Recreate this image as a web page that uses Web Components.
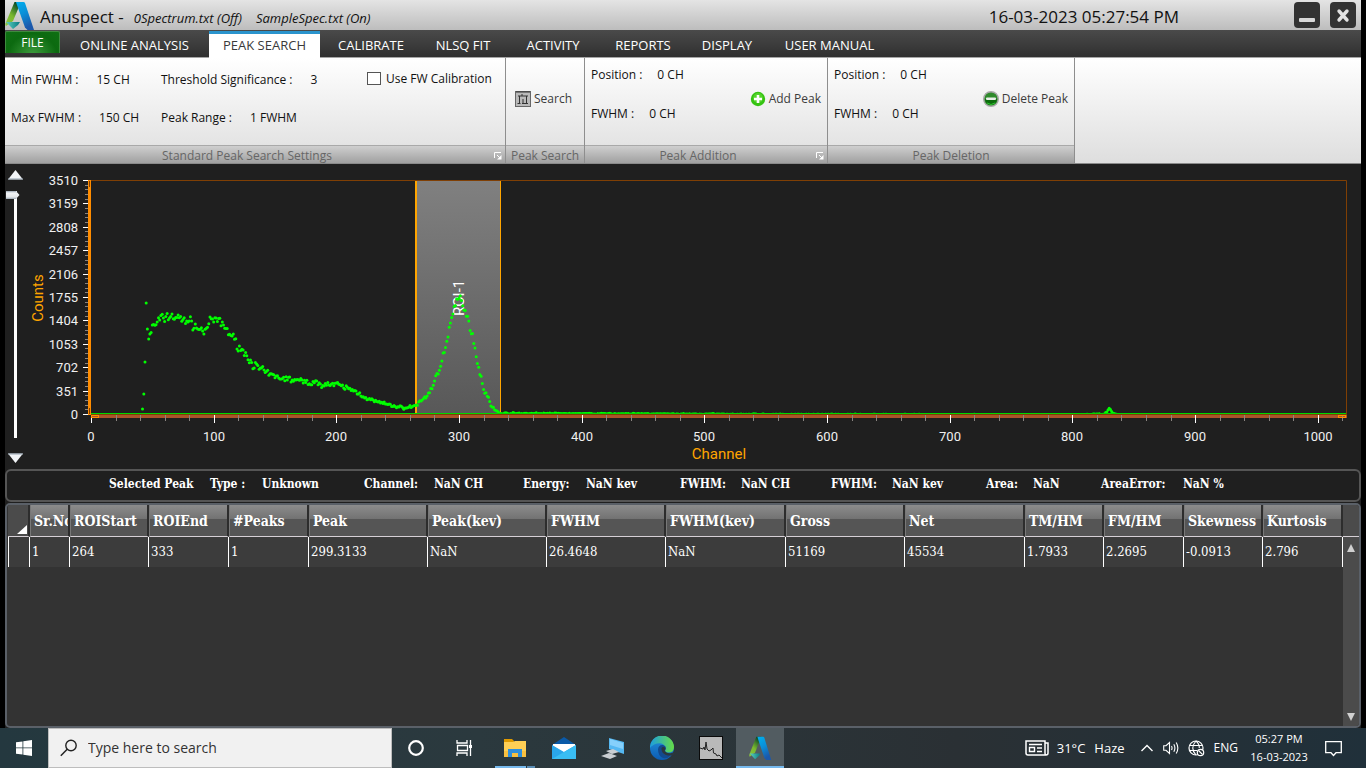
<!DOCTYPE html>
<html lang="en">
<head>
<meta charset="utf-8">
<title>Anuspect</title>
<style>
html, body { margin: 0; background: #000; }
body { font-family: "Open Sans", "Noto Sans", sans-serif; font-size: 12px; color: #111; }
</style>
</head>
<body>
<anuspect-desktop></anuspect-desktop>

<script>
const define = (name, html, extra) => {
  const tpl = document.createElement('template');
  tpl.innerHTML = html;
  customElements.define(name, class extends HTMLElement {
    constructor() {
      super();
      this.attachShadow({ mode: 'open' }).append(tpl.content.cloneNode(true));
    }
    connectedCallback() { if (extra) extra(this, this.shadowRoot); }
  });
};

/* ---------- logo ---------- */
define('app-logo', `
<style>:host{display:block;width:var(--w,30px);height:var(--h,29px)} svg{display:block;width:100%;height:100%}</style>
<svg viewBox="0 0 30 29" preserveAspectRatio="none" aria-hidden="true">
  <defs>
    <linearGradient id="g" x1="0" y1="1" x2=".6" y2="0"><stop offset="0" stop-color="#8cc63f"/><stop offset=".5" stop-color="#7ab82e"/><stop offset="1" stop-color="#0b4a27"/></linearGradient>
    <linearGradient id="b" x1="0" y1="0" x2=".4" y2="1"><stop offset="0" stop-color="#00b0ee"/><stop offset=".5" stop-color="#0a8fd8"/><stop offset="1" stop-color="#1b58ab"/></linearGradient>
    <linearGradient id="t" x1="0" y1="0" x2="1" y2="0"><stop offset="0" stop-color="#5fd0c0"/><stop offset="1" stop-color="#067a83"/></linearGradient>
  </defs>
  <path d="M9.500 1H16L8 20 1 25Q0 24 .5 22.500Z" fill="url(#g)"/>
  <path d="M1 21H15L13 24 8 28Z" fill="url(#t)"/>
  <path d="M11 1H18.500Q19.500 1 20 2L29 29H22.500L20 26.500 11.800 3.500Z" fill="url(#b)"/>
</svg>`);

/* ---------- title bar ---------- */
define('title-bar', `
<style>
:host{display:flex;align-items:center;height:30px;background:linear-gradient(#e4e4e4,#bdbdbd);color:#111}
h1{margin:4px 0 0 5px;font-size:17px;font-weight:400;line-height:24px}
.files{display:flex;gap:14px;margin:6px 0 0 10px;font-style:italic;font-size:13px;line-height:20px}
time{margin:4px 115px 0 auto;font-size:17px;line-height:24px}
button{width:26px;height:26px;padding:0;border:0;border-radius:4px;background:#333;display:block}
button svg{display:block}
.min{margin-right:10px}.close{margin-right:5px}
</style>
<app-logo></app-logo>
<h1>Anuspect -</h1>
<div class="files"><span>0Spectrum.txt (Off)</span><span>SampleSpec.txt (On)</span></div>
<time>16-03-2023 05:27:54 PM</time>
<button class="min" aria-label="Minimize"><svg width="26" height="26"><rect x="5" y="16" width="16" height="4" rx="1" fill="#d8d8d8"/></svg></button>
<button class="close" aria-label="Close"><svg width="26" height="26"><path d="M9 9 17 18M17 9 9 18" stroke="#e2e2e2" stroke-width="3.400" stroke-linecap="round"/></svg></button>
`);

/* ---------- tabs ---------- */
define('ribbon-tabs', `
<style>
:host{display:flex;gap:4px;background:linear-gradient(#4a4a4a,#303030);border-bottom:1px solid #a6a6a6;box-sizing:border-box;height:28px}
button{font:13px/26px "Open Sans","Noto Sans",sans-serif;color:#fff;background:none;border:0;padding:0;white-space:nowrap;height:27px;margin-top:1px;text-align:center;width:var(--w)}
.file{height:22px;width:55px;line-height:20px;font-size:12px;border:1px solid #3f8a3f;border-bottom:0;border-radius:2px 2px 0 0;background:radial-gradient(ellipse at 50% 110%,#3f9d3f,#0c6a10 65%,#0f7013)}
.on{background:#fff;color:#3a3a3a;border-top:3px solid #2a94cd;line-height:20px;padding-bottom:2px}
</style>
<button class="file">FILE</button>
<button style="--w:141px">ONLINE ANALYSIS</button>
<button class="on" style="--w:111px">PEAK SEARCH</button>
<button style="--w:94px">CALIBRATE</button>
<button style="--w:82px">NLSQ FIT</button>
<button style="--w:90px">ACTIVITY</button>
<button style="--w:82px">REPORTS</button>
<button style="--w:78px">DISPLAY</button>
<button style="--w:119px">USER MANUAL</button>
`);

/* ---------- ribbon ---------- */
define('ribbon-group', `
<style>
:host{display:flex;flex-direction:column;box-sizing:border-box;border-right:1px solid #8e8e8e;width:var(--w)}
.body{flex:1;display:flex;align-items:center}
.foot{position:relative;height:17px;border-top:1px solid #a9a9a9;background:linear-gradient(#cfcfcf,#a0a0a0);color:#666;text-align:center;line-height:19px;font-size:12px;white-space:nowrap}
button{display:none;position:absolute;right:3px;top:6px;padding:0;border:0;background:none}
:host([launcher]) button{display:block}
:host([launcher]) .foot{padding-right:16px}
svg{display:block}
</style>
<div class="body"><slot></slot></div>
<div class="foot"><slot name="title"></slot><button aria-label="More settings"><svg width="8" height="8"><path d="M.5 6V.5H7M3 3l3 3" stroke="#fff" fill="none"/><path d="M7.500 3V7.500H3Z" fill="#fff"/></svg></button></div>
`);

define('field-pair', `
<style>:host{display:flex;gap:var(--gap,15px);line-height:16px;white-space:nowrap}</style>
<span><slot name="label"></slot></span><span><slot></slot></span>`);

define('ribbon-action', `
<style>
:host{display:block}
button{display:flex;align-items:center;gap:3px;padding:0;border:0;background:none;color:#3c3c3c;font:12px/16px "Open Sans","Noto Sans",sans-serif;white-space:nowrap}
::slotted(svg){display:block}
</style>
<button><slot name="icon"></slot><slot></slot></button>`);

define('ribbon-bar', `
<style>
:host{display:flex;height:106px;background:linear-gradient(#fff,#dedede);border-bottom:1px solid #8a8a8a;box-sizing:border-box}
.set{--gap:18px;flex:1;align-self:stretch;display:grid;grid-template-columns:150px 206px 1fr;grid-template-rows:16px 16px;row-gap:22px;padding:14px 0 0 6px;box-sizing:border-box}
.two{flex:1;align-self:stretch;display:grid;grid-template-rows:16px 16px;row-gap:23px;padding:9px 0 0 6px;box-sizing:border-box}
label{display:flex;align-items:center;gap:5px;height:13px;white-space:nowrap}
input{appearance:none;width:14px;height:13px;margin:0;border:1px solid #555;background:#fff}
ribbon-action{margin:-5px 6px 0 0}
.search{margin-left:9px}
</style>
<ribbon-group launcher style="--w:501px">
  <div class="set">
    <field-pair><span slot="label">Min FWHM :</span>15 CH</field-pair>
    <field-pair><span slot="label">Threshold Significance :</span>3</field-pair>
    <label><input type="checkbox">Use FW Calibration</label>
    <field-pair><span slot="label">Max FWHM :</span>150 CH</field-pair>
    <field-pair><span slot="label">Peak Range :</span>1 FWHM</field-pair>
  </div>
  <span slot="title">Standard Peak Search Settings</span>
</ribbon-group>
<ribbon-group style="--w:79px">
  <ribbon-action class="search"><svg slot="icon" width="16" height="16"><rect x=".5" y=".5" width="15" height="15" fill="#b9b9b9" stroke="#666"/><path d="M1 1H15" stroke="#333"/><path d="M3 5H13M4.500 5V12M8 8V12M11.500 5V12M2.500 12.500H5.500M7 12.500H13M7 5V3" stroke="#333" fill="none"/></svg>Search</ribbon-action>
  <span slot="title">Peak Search</span>
</ribbon-group>
<ribbon-group launcher style="--w:243px">
  <div class="two">
    <field-pair><span slot="label">Position :</span>0 CH</field-pair>
    <field-pair><span slot="label">FWHM :</span>0 CH</field-pair>
  </div>
  <ribbon-action><svg slot="icon" width="16" height="16"><circle cx="8" cy="8" r="7.200" fill="#35c312"/><circle cx="8" cy="7" r="5" fill="#54d32b"/><path d="M8 4V12M4 8H12" stroke="#fff" stroke-width="2.600"/></svg>Add Peak</ribbon-action>
  <span slot="title">Peak Addition</span>
</ribbon-group>
<ribbon-group style="--w:247px">
  <div class="two">
    <field-pair><span slot="label">Position :</span>0 CH</field-pair>
    <field-pair><span slot="label">FWHM :</span>0 CH</field-pair>
  </div>
  <ribbon-action><svg slot="icon" width="16" height="16"><circle cx="8" cy="8" r="7.300" fill="#2f8a2c" stroke="#a8a8a8" stroke-width="1.400"/><path d="M2 8A6 6 0 0 0 14 8Z" fill="#0b6b0b"/><path d="M4 12Q8 15 12 12" stroke="#2fc52f" fill="none"/><rect x="3" y="6.500" width="10" height="2.600" rx="1" fill="#e8efe8"/></svg>Delete Peak</ribbon-action>
  <span slot="title">Peak Deletion</span>
</ribbon-group>
`);

/* ---------- vertical scale slider ---------- */
define('scale-slider', `
<style>
:host{display:flex;flex-direction:column;align-items:center;width:20px;padding:6px 0 5px;box-sizing:border-box}
button{padding:0;border:0;background:none;height:10px}
svg{display:block}
input{flex:1;min-height:0;width:20px;margin:11px 0 15px;appearance:none;background:linear-gradient(#fff,#fff) 9px 0/3px 100% no-repeat;writing-mode:vertical-lr;direction:rtl}
input::-webkit-slider-thumb{appearance:none;width:14px;height:8px;margin-right:5px;background:linear-gradient(#9aa6b2,#f2f4f6 25%,#e4e7ea 75%,#9aa6b2);clip-path:polygon(0 0,75% 0,100% 50%,75% 100%,0 100%)}
</style>
<button aria-label="Zoom in"><svg width="15" height="10"><path d="M0 9.500 7.500 0 15 9.500Z" fill="#f2f5f8"/><path d="M0 9H15" stroke="#93a1ae"/></svg></button>
<input type="range" min="0" max="100" value="100" aria-label="Counts scale">
<button aria-label="Zoom out"><svg width="15" height="10"><path d="M0 .5H15L7.500 10Z" fill="#f2f5f8"/><path d="M0 1H15" stroke="#93a1ae"/></svg></button>
`);

/* ---------- spectrum ---------- */
// [channel, counts] knots of the smooth spectrum; counting noise is added on top
const KNOTS = [[0,0],[41,0],[42,90],[43,315],[44,795],[45,1680],[46,1290],[47,1140],[48,1215],[49,1260],[50,1350],[52,1320],[54,1400],[56,1430],[59,1450],[62,1470],[65,1490],[68,1470],[71,1450],[74,1430],[77,1440],[80,1400],[84,1350],[87,1300],[90,1270],[92,1250],[94,1320],[97,1380],[100,1430],[102,1440],[104,1390],[107,1370],[110,1290],[113,1230],[117,1120],[121,1020],[125,930],[129,840],[132,760],[137,700],[145,610],[154,560],[170,510],[186,470],[200,455],[211,390],[219,320],[227,230],[235,190],[243,150],[254,110],[261,120],[265,150],[274,290],[279,450],[283,660],[287,890],[289,1010],[292,1235],[294,1430],[296,1590],[298,1730],[300,1740],[302,1700],[305,1600],[308,1400],[311,1185],[313,1010],[316,710],[318,560],[320,410],[323,290],[326,145],[330,60],[334,25],[400,20],[560,9],[700,5],[800,4],[826,12],[828,40],[830,110],[832,50],[834,14],[837,3],[1023,2]];
const CHART = { left: 86, right: 15, top: 17, height: 234, maxCount: 3510, maxChannel: 1023 };

function spectrum() {
  let seed = 7, k = 0;
  const rnd = () => (seed = (seed * 16807) % 2147483647) / 2147483647;
  const out = [];
  for (let c = 0; c <= CHART.maxChannel; c++) {
    while (k < KNOTS.length - 2 && KNOTS[k + 1][0] <= c) k++;
    const [c0, v0] = KNOTS[k], [c1, v1] = KNOTS[k + 1];
    const mean = v0 + (v1 - v0) * (c - c0) / (c1 - c0);
    const noise = c < 49 ? 0 : (rnd() + rnd() + rnd() - 1.5) * 2 * Math.sqrt(mean);
    out.push(Math.max(0, mean + noise));
  }
  return out;
}

define('spectrum-chart', `
<style>
:host{display:block;flex:1;min-width:0;height:304px}
svg{display:block;width:100%;height:100%;font-family:Roboto,sans-serif}
.n{fill:#f0f0f0;font-size:13px}.t{fill:#ffa500;font-size:15px}.r{fill:#fff;font-size:15px}
</style>
<svg role="img" aria-label="Counts by channel"></svg>`, (host, root) => {
  const data = spectrum(), svg = root.querySelector('svg');
  const off = 20;
  const draw = () => {
    const w = host.clientWidth, L = CHART.left - off, R = w - CHART.right, T = CHART.top, B = T + CHART.height;
    const X = c => L + c * (R - L) / CHART.maxChannel, Y = v => B - v * CHART.height / CHART.maxCount;
    const r = Math.round;
    let s = '<defs><linearGradient id="roi" x1="0" y1="0" x2="0" y2="1"><stop offset="0" stop-color="#808080"/><stop offset="1" stop-color="#585858"/></linearGradient>' +
      `<clipPath id="plot"><rect x="${L}" y="${T}" width="${R - L}" height="${B - T - 1}"/></clipPath></defs>`;
    const a = Math.ceil(X(264)), b = r(X(333));
    s += `<rect x="${a}" y="${T}" width="${b - a}" height="${B - T}" fill="url(#roi)"/>`;
    s += `<path d="M${L} ${T - .5}H${R + .5}V${B}" fill="none" stroke="#7f3f04"/>`;
    s += `<rect x="${a}" y="${T}" width="2" height="${B - T - 1}" fill="#ffa500"/><rect x="${b}" y="${T}" width="1" height="${B - T - 1}" fill="#ffa500"/>`;
    s += `<text class="r" transform="translate(${r(X(299)) + 6} ${T + 135}) rotate(-90)">ROI-1</text>`;
    s += '<g clip-path="url(#plot)" fill="#0f0">' + data.map((v, c) => `<circle cx="${X(c).toFixed(1)}" cy="${Y(v).toFixed(1)}" r="1.500"/>`).join('') + '</g>';
    s += `<rect x="${L}" y="${B - 2}" width="${R - L}" height="1" fill="#00d800"/>`;
    // channel axis
    s += `<rect x="${L}" y="${B - 1}" width="${R - L + 1}" height="1" fill="#7f3f04"/><rect x="${L}" y="${B}" width="${R - L + 1}" height="3" fill="#a9542a"/>`;
    for (let c = 0; c <= CHART.maxChannel; c += 20) {
      const big = c % 100 === 0, x = r(X(c));
      s += `<rect x="${x}" y="${B}" width="1" height="${big ? 8 : 6}" fill="${big ? '#fff' : '#8a8480'}"/>`;
      if (big) s += `<text class="n" text-anchor="middle" x="${x}" y="${B + 26}">${c}</text>`;
    }
    s += `<rect x="${L + .5}" y="${B + .5}" width="7" height="2" fill="none" stroke="#ff8c00"/><rect x="${R - 7.5}" y="${B + .5}" width="7" height="2" fill="none" stroke="#ff8c00"/>`;
    // counts axis
    for (let i = 0; i <= 50; i++) {
      const big = i % 5 === 0, y = r(B - i * CHART.height / 50) - 1;
      s += `<rect x="${L - (big ? 8 : 6)}" y="${y}" width="${big ? 8 : 6}" height="1" fill="${big ? '#fff' : '#8a8480'}"/>`;
      if (big) s += `<text class="n" text-anchor="end" x="${L - 13}" y="${y + 5}">${i / 5 * 351}</text>`;
    }
    s += `<rect x="${L - 3}" y="${T - 1}" width="3" height="${B - T + 1}" fill="#ff8c00"/>`;
    s += `<path d="M${L - 1.5} ${T}v6M${L - 1.5} ${B - 1}v-6" stroke="#7f3f04"/>`;
    s += `<text class="t" text-anchor="middle" x="${r((L + R) / 2)}" y="${B + 44}">Channel</text>`;
    s += `<text class="t" text-anchor="middle" transform="translate(18 ${r((T + B) / 2)}) rotate(-90)">Counts</text>`;
    svg.innerHTML = s;
  };
  draw();
  new ResizeObserver(draw).observe(host);
});

/* ---------- selected peak read-out ---------- */
define('peak-status', `
<style>
:host{display:block;border:2px solid #555;border-radius:6px;background:#1f1f1f;height:33px;box-sizing:border-box}
dl{margin:0;padding:1px 0 0 102px;display:grid;grid-template-columns:101px 52px 102px 70px 89px 63px 94px 61px 90px 61px 94px 47px 68px 82px 1fr;color:#fff;font:bold 12px/25px "DejaVu Serif Condensed","DejaVu Serif",serif;white-space:nowrap}
dt,dd{margin:0}
</style>
<dl><dt>Selected Peak</dt><dt>Type :</dt><dd>Unknown</dd><dt>Channel:</dt><dd>NaN CH</dd><dt>Energy:</dt><dd>NaN kev</dd><dt>FWHM:</dt><dd>NaN CH</dd><dt>FWHM:</dt><dd>NaN kev</dd><dt>Area:</dt><dd>NaN</dd><dt>AreaError:</dt><dd>NaN %</dd></dl>
`);

/* ---------- ROI table ---------- */
const COLS = [['Sr.No',40,'1'],['ROIStart',79,'264'],['ROIEnd',80,'333'],['#Peaks',80,'1'],['Peak',119,'299.3133'],['Peak(kev)',119,'NaN'],['FWHM',119,'26.4648'],['FWHM(kev)',120,'NaN'],['Gross',119,'51169'],['Net',120,'45534'],['TM/HM',79,'1.7933'],['FM/HM',80,'2.2695'],['Skewness',79,'-0.0913'],['Kurtosis',80,'2.796']];
define('roi-table', `
<style>
:host{display:flex;flex:1;min-height:120px;border:2px solid #5a6068;border-radius:5px;background:#333;box-sizing:border-box;overflow:hidden;font-family:"DejaVu Serif Condensed","DejaVu Serif",serif;color:#fff}
.pane{flex:1;min-width:0;padding-left:1px}
table{width:100%;table-layout:fixed;border-collapse:separate;border-spacing:0}
th{box-sizing:border-box;height:32px;padding:0 0 0 3px;text-align:left;font-size:14px;font-weight:700;line-height:16px;overflow:hidden;white-space:nowrap;border-bottom:1px solid #d6d0d6;border-right:2px solid #2d2d2d;border-left:1px solid #787878;background:linear-gradient(#8c8c8c,#727272 45%,#555 46%,#555)}
th.corner{background:#4b4b4b;border-left:0;padding:0;vertical-align:bottom}
th.corner svg{display:block;margin:0 0 2px 9px}
td{box-sizing:border-box;height:30px;padding:0 0 0 2px;font-size:13px;line-height:16px;white-space:nowrap;overflow:hidden;background:#3c3c3c;border-right:1px solid #fff}
td:first-child{border-left:1px solid #fff}
.bar{width:16px;display:flex;flex-direction:column;background:#4b4b4b}
.bar i{height:31px;border-bottom:1px solid #d6d0d6}
.bar button{height:22px;padding:0;border:0;background:none;display:flex;align-items:center;justify-content:center}
.bar button:last-child{margin-top:auto;height:18px}
</style>
<div class="pane"><table>
<colgroup><col style="width:22px">${COLS.map(c => `<col style="width:${c[1]}px">`).join('')}</colgroup>
<thead><tr><th class="corner" aria-label="Select all"><svg width="10" height="9"><path d="M10 0V9H0Z" fill="#fff"/></svg></th>${COLS.map(c => `<th>${c[0]}</th>`).join('')}</tr></thead>
<tbody><tr><td></td>${COLS.map(c => `<td>${c[2]}</td>`).join('')}</tr></tbody>
</table></div>
<div class="bar"><i></i><button aria-label="Scroll up"><svg width="8" height="8"><path d="M4 0 8 8H0Z" fill="#d0d0d0"/></svg></button><button aria-label="Scroll down"><svg width="8" height="8"><path d="M4 8 8 0H0Z" fill="#d0d0d0"/></svg></button></div>
`);

/* ---------- taskbar ---------- */
define('task-button', `
<style>
:host{display:block;width:48px}
button{position:relative;width:100%;height:40px;padding:0;border:0;background:none;display:flex;align-items:center;justify-content:center}
:host([open]) button{background:linear-gradient(#76b9ed,#76b9ed) 4px 38px/31px 2px no-repeat,linear-gradient(#5a8db5,#5a8db5) 36px 38px/8px 2px no-repeat}
:host([active]) button{background:#525c61;box-shadow:inset 0 -2px #76b9ed}
</style><button><slot></slot></button>`);

define('task-bar', `
<style>
:host{display:flex;height:40px;color:#fff;background:linear-gradient(90deg,#24383f,#2b393e 35%,#2a3034 70%,#20303a)}
form{width:344px;height:40px;box-sizing:border-box;margin:0;display:flex;align-items:center;gap:10px;padding:0 11px;background:#f1f1f1;border:1px solid #bdbdbd}
input{flex:1;min-width:0;border:0;padding:0;outline:0;background:none;font:14px/22px "Open Sans","Noto Sans",sans-serif;color:#333}
input::placeholder{color:#333;opacity:1}
svg{display:block}
.apps{display:flex;gap:1px;margin-left:3px}
.tray{margin-left:auto;display:flex;align-items:center;white-space:nowrap}
.tray span{line-height:20px}
time{display:block;text-align:center;font-size:11px;line-height:18px;width:66px;margin:0 13px 0 8px}
.w{font-size:13px}
</style>
<task-button><svg width="16" height="16" aria-label="Start"><path d="M0 2.300 6.500 1.400V7.500H0ZM7.300 1.300 16 0V7.500H7.300ZM0 8.300H6.500V14.600L0 13.700ZM7.300 8.300H16V16L7.300 14.700Z" fill="#fff"/></svg></task-button>
<form role="search"><svg width="18" height="18"><circle cx="11" cy="6.500" r="5.200" fill="none" stroke="#222" stroke-width="1.400"/><path d="M7.200 10.300.8 16.700" stroke="#222" stroke-width="1.500"/></svg><input type="search" placeholder="Type here to search" aria-label="Search"></form>
<task-button><svg width="18" height="18"><circle cx="9" cy="9" r="6.800" fill="none" stroke="#fff" stroke-width="2.200"/></svg></task-button>
<task-button><svg width="18" height="18"><path d="M2 1V4H12V1M2 17V14H12V17M2.500 6.500H12.500V11.500H2.500ZM15.500 1V17" fill="none" stroke="#fff" stroke-width="1.300"/><rect x="14" y="6" width="3" height="3" fill="#fff"/></svg></task-button>
<div class="apps">
<task-button open><svg width="22" height="20"><path d="M0 1H8L10 3V8H0Z" fill="#e09a00"/><path d="M0 4H9L11 3H22V19H0Z" fill="#ffcf55"/><path d="M0 13H22V19H0Z" fill="#f9c03f"/><path d="M4 19V11H18V19H14V15H8V19Z" fill="#2f8fdc"/></svg></task-button>
<task-button><svg width="24" height="22"><path d="M0 8 12 0 24 8V12H0Z" fill="#0a5aa8"/><path d="M1 7H23V9L12 16 1 9Z" fill="#fff"/><path d="M0 8 12 15 24 8V22H0Z" fill="#2aa6ea"/><path d="M0 22 12 15 24 8V22Z" fill="#39bdf3"/></svg></task-button>
<task-button><svg width="24" height="22"><path d="M8 1 23 5V17L8 12Z" fill="#55b8f2"/><path d="M9 2 22 6V12L9 8Z" fill="#86d0fb"/><path d="M5 14 12 12 18 15 11 17ZM0 19 8 16 16 19 9 22Z" fill="#c9ced2"/></svg></task-button>
<task-button><svg width="24" height="24" viewBox="0 0 24 24"><defs><linearGradient id="e1" x1="0" x2="1"><stop offset="0" stop-color="#1c9de0"/><stop offset="1" stop-color="#66dd45"/></linearGradient><linearGradient id="e2" x1="0" y1="0" x2="0" y2="1"><stop offset="0" stop-color="#2393dd"/><stop offset="1" stop-color="#0c5cb3"/></linearGradient></defs><circle cx="12" cy="12" r="12" fill="url(#e2)"/><path d="M0 12A12 12 0 0 1 24 11Q24 16.500 18.500 16.500 14.500 16.500 15 14.500 16.500 13 15.500 11 13 6 7 7.500 2 9 0 12Z" fill="url(#e1)"/><path d="M8 13.500Q8.500 8.500 13 9 16.500 10 15.500 13 14 16 18 17 21 17.500 22.500 16.500 19 23.500 13 22 8 20 8 13.500Z" fill="#134a8e"/><path d="M11.500 12Q13 10 15.500 12 15.500 13.500 14.500 15 16 17 20 17.500 23 17 24 15.500L24 19Q20 20 16 19 11 17 11.500 12Z" fill="#2b373d"/></svg></task-button>
<task-button><svg width="24" height="24"><rect x=".5" y=".5" width="23" height="23" fill="#b9b9b9" stroke="#0a0a0a"/><path d="M1 12 4 13 5 11 6 14 7 6 8 13 10 15 12 14 14 12 14.500 17 17 18 18 20 20 19 23 22" fill="none" stroke="#222"/></svg></task-button>
<task-button active><app-logo style="--w:23px;--h:24px"></app-logo></task-button>
</div>
<div class="tray">
  <svg width="24" height="16"><path d="M20 3H23V13Q23 15 21 15H3Q1 15 1 13V1H20V13Q20 15 21.500 15" fill="none" stroke="#fff" stroke-width="1.500"/><path d="M4 4.500H17M12 8H17M12 11.500H17M4.500 7.500H9.500V11.500H4.500Z" fill="none" stroke="#fff" stroke-width="1.400"/></svg>
  <span class="w" style="margin-left:8px">31°C</span><span class="w" style="margin-left:9px">Haze</span>
  <svg width="12" height="8" style="margin:0 10px 0 16px"><path d="M.5 7 6 1.500 11.500 7" fill="none" stroke="#fff" stroke-width="1.400"/></svg>
  <svg width="17" height="14"><path d="M.7 4.700H3L6.500 1.500V12.500L3 9.300H.7Z" fill="none" stroke="#fff" stroke-width="1.100"/><path d="M8.500 5Q9.600 7 8.500 9M10.800 3.200Q13 7 10.800 10.800M13.200 1.500Q16.500 7 13.200 12.500" fill="none" stroke="#fff" stroke-width="1.100"/></svg>
  <svg width="17" height="17" style="margin:0 9px 0 8px"><circle cx="8" cy="8" r="7" fill="none" stroke="#fff" stroke-width="1.200"/><path d="M1.500 5.500H14.500M1.500 10.500H9M8 1Q1.500 8 8 15M8 1Q11.500 4 11.300 8" fill="none" stroke="#fff" stroke-width="1.100"/><circle cx="12.500" cy="12.500" r="3.200" fill="#222d33" stroke="#fff" stroke-width="1.200"/><path d="M10.500 10.500 14.500 14.500" stroke="#fff" stroke-width="1.100"/></svg>
  <span style="font-size:12px">ENG</span>
  <time>05:27 PM<br>16-03-2023</time>
  <svg width="17" height="17" style="margin-right:24px"><path d="M.7 1.700H16.300V12.700H11L8.500 15.500 6 12.700H.7Z" fill="none" stroke="#fff" stroke-width="1.300"/></svg>
</div>
`);

/* ---------- desktop ---------- */
define('anuspect-desktop', `
<style>
:host{display:flex;flex-direction:column;min-height:100vh;background:#000}
main{flex:1;display:flex;flex-direction:column;margin:0 5px;background:#1f1f1f}
.plot{display:flex;height:304px;margin-bottom:1px}
peak-status{margin-bottom:1px}
</style>
<main>
  <title-bar></title-bar>
  <ribbon-tabs></ribbon-tabs>
  <ribbon-bar></ribbon-bar>
  <div class="plot"><scale-slider></scale-slider><spectrum-chart></spectrum-chart></div>
  <peak-status></peak-status>
  <roi-table></roi-table>
</main>
<task-bar></task-bar>
`);
</script>
</body>
</html>
